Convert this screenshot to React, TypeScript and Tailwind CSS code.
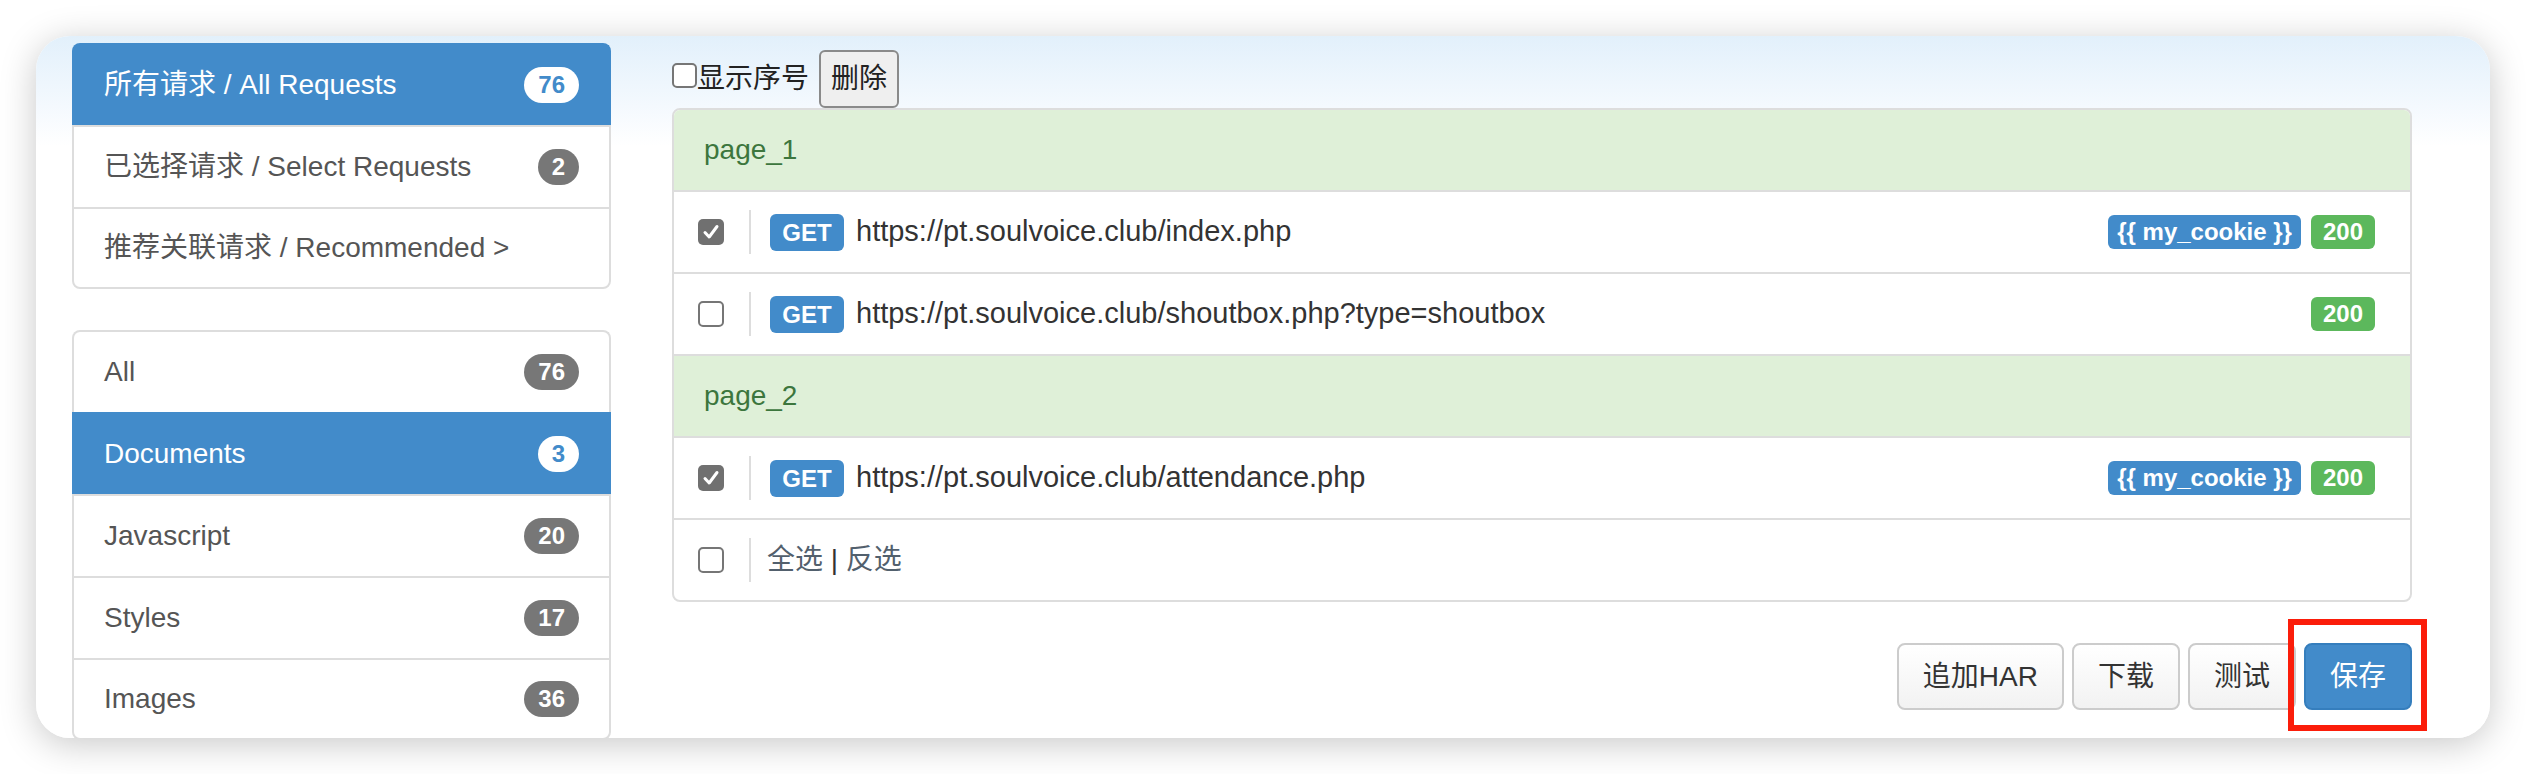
import React from "react";

const FONT = "font-['Liberation_Sans','Noto_Sans_CJK_SC',sans-serif]";

function Badge({ n, active }: { n: string; active?: boolean }) {
  return (
    <span
      className={
        "h-[36px] px-[14px] rounded-full text-[24px] font-bold leading-[36px] " +
        (active ? "bg-white text-[#428bca]" : "bg-[#777777] text-white")
      }
    >
      {n}
    </span>
  );
}

function NavItem({ label, n, active, first, last }: { label: string; n?: string; active?: boolean; first?: boolean; last?: boolean }) {
  return (
    <div
      className={
        "flex items-center justify-between h-[82px] px-[30px] border-x-2 border-t-2 text-[28px] " +
        (active ? "bg-[#428bca] border-[#428bca] text-white " : "bg-white border-[#dddddd] text-[#555555] ") +
        (first ? "rounded-t-[8px] " : "") +
        (last ? "border-b-2 rounded-b-[8px] " : "")
      }
    >
      <span>{label}</span>
      {n && <Badge n={n} active={active} />}
    </div>
  );
}

function Check({ on, small }: { on?: boolean; small?: boolean }) {
  if (on)
    return (
      <span className="w-[26px] h-[26px] rounded-[5px] bg-[#707070] flex items-center justify-center shrink-0">
        <svg width="18" height="18" viewBox="0 0 18 18">
          <path d="M3 9.5 L7.2 14 L15 3.5" stroke="white" strokeWidth="3" fill="none" strokeLinecap="round" strokeLinejoin="round" />
        </svg>
      </span>
    );
  return (
    <span
      className={"block rounded-[5px] border-2 border-[#767676] bg-white shrink-0 " + (small ? "w-[25px] h-[25px]" : "w-[26px] h-[26px]")}
    />
  );
}

function Label({ text, color, px }: { text: string; color: string; px: string }) {
  return (
    <span className={`h-[34px] ${px} ${color} rounded-[6px] text-white text-[24px] font-bold leading-[34px]`}>{text}</span>
  );
}

function ReqRow({ on, url, cookie }: { on?: boolean; url: string; cookie?: boolean }) {
  return (
    <div className="flex items-center h-[82px] border-t-2 border-[#dddddd] pl-[24px] pr-[35px]">
      <Check on={on} />
      <span className="w-[2px] h-[44px] bg-[#dddddd] ml-[25px]" />
      <span className="ml-[19px] h-[37px] w-[74px] rounded-[6px] bg-[#428bca] text-white text-[24px] font-bold leading-[37px] text-center">
        GET
      </span>
      <span className="ml-[12px] text-[29px] text-[#333333]">{url}</span>
      <div className="ml-auto flex gap-[10px]">
        {cookie && <Label text="{{ my_cookie }}" color="bg-[#428bca]" px="px-[9px]" />}
        <Label text="200" color="bg-[#5cb85c]" px="px-[12px]" />
      </div>
    </div>
  );
}

function PageHead({ name, first }: { name: string; first?: boolean }) {
  return (
    <div
      className={
        "flex items-center bg-[#dff0d8] text-[#3c763d] text-[28px] pl-[30px] " +
        (first ? "h-[80px]" : "h-[82px] border-t-2 border-[#dddddd]")
      }
    >
      {name}
    </div>
  );
}

function Btn({ children, primary }: { children: React.ReactNode; primary?: boolean }) {
  return (
    <span
      className={
        "h-[67px] px-[24px] rounded-[8px] border-2 text-[28px] flex items-center " +
        (primary
          ? "bg-[#428bca] border-[#357ebd] text-white"
          : "bg-[linear-gradient(180deg,#ffffff,#f2f2f2)] border-[#cccccc] text-[#333333]")
      }
    >
      {children}
    </span>
  );
}

export default function App() {
  return (
    <div className={`w-[2526px] h-[774px] bg-white p-[36px] ${FONT}`}>
      <div className="h-[702px] rounded-[34px] overflow-hidden shadow-[0_6px_36px_rgba(0,0,0,0.22)] bg-[linear-gradient(180deg,#e2f0fb_0px,#f4f9fe_70px,#ffffff_110px)] flex pl-[36px]">
        <div className="w-[539px] pt-[7px] shrink-0">
          <div className="flex flex-col">
            <NavItem label="所有请求 / All Requests" n="76" active first />
            <NavItem label="已选择请求 / Select Requests" n="2" />
            <NavItem label="推荐关联请求 / Recommended >" last />
          </div>
          <div className="flex flex-col mt-[41px]">
            <NavItem label="All" n="76" first />
            <NavItem label="Documents" n="3" active />
            <NavItem label="Javascript" n="20" />
            <NavItem label="Styles" n="17" />
            <NavItem label="Images" n="36" last />
          </div>
        </div>

        <div className="ml-[61px] w-[1740px] pt-[13px] flex flex-col">
          <div className="flex items-center h-[59px]">
            <span className="mb-[6px]">
              <Check small />
            </span>
            <span className="text-[28px] text-[#222222]">显示序号</span>
            <span className="ml-[10px] h-[58px] px-[10px] rounded-[6px] border-2 border-[#8a8a8a] bg-[#efefef] text-[28px] text-[#222222] flex items-center">
              删除
            </span>
          </div>

          <div className="border-2 border-[#dddddd] rounded-[8px] overflow-hidden bg-white">
            <PageHead name="page_1" first />
            <ReqRow on url="https://pt.soulvoice.club/index.php" cookie />
            <ReqRow url="https://pt.soulvoice.club/shoutbox.php?type=shoutbox" />
            <PageHead name="page_2" />
            <ReqRow on url="https://pt.soulvoice.club/attendance.php" cookie />
            <div className="flex items-center h-[82px] border-t-2 border-[#dddddd] pl-[24px]">
              <Check />
              <span className="w-[2px] h-[44px] bg-[#dddddd] ml-[25px]" />
              <span className="ml-[16px] text-[28px] text-[#52606d]">
                全选 <span className="text-[#333333]">|</span> 反选
              </span>
            </div>
          </div>

          <div className="mt-[41px] flex justify-end gap-[8px]">
            <Btn>追加HAR</Btn>
            <Btn>下载</Btn>
            <Btn>测试</Btn>
            <span className="relative">
              <Btn primary>保存</Btn>
              <span className="absolute -left-[16px] -top-[24px] w-[139px] h-[112px] border-[6px] border-[#fb1d0a]" />
            </span>
          </div>
        </div>
      </div>
    </div>
  );
}
